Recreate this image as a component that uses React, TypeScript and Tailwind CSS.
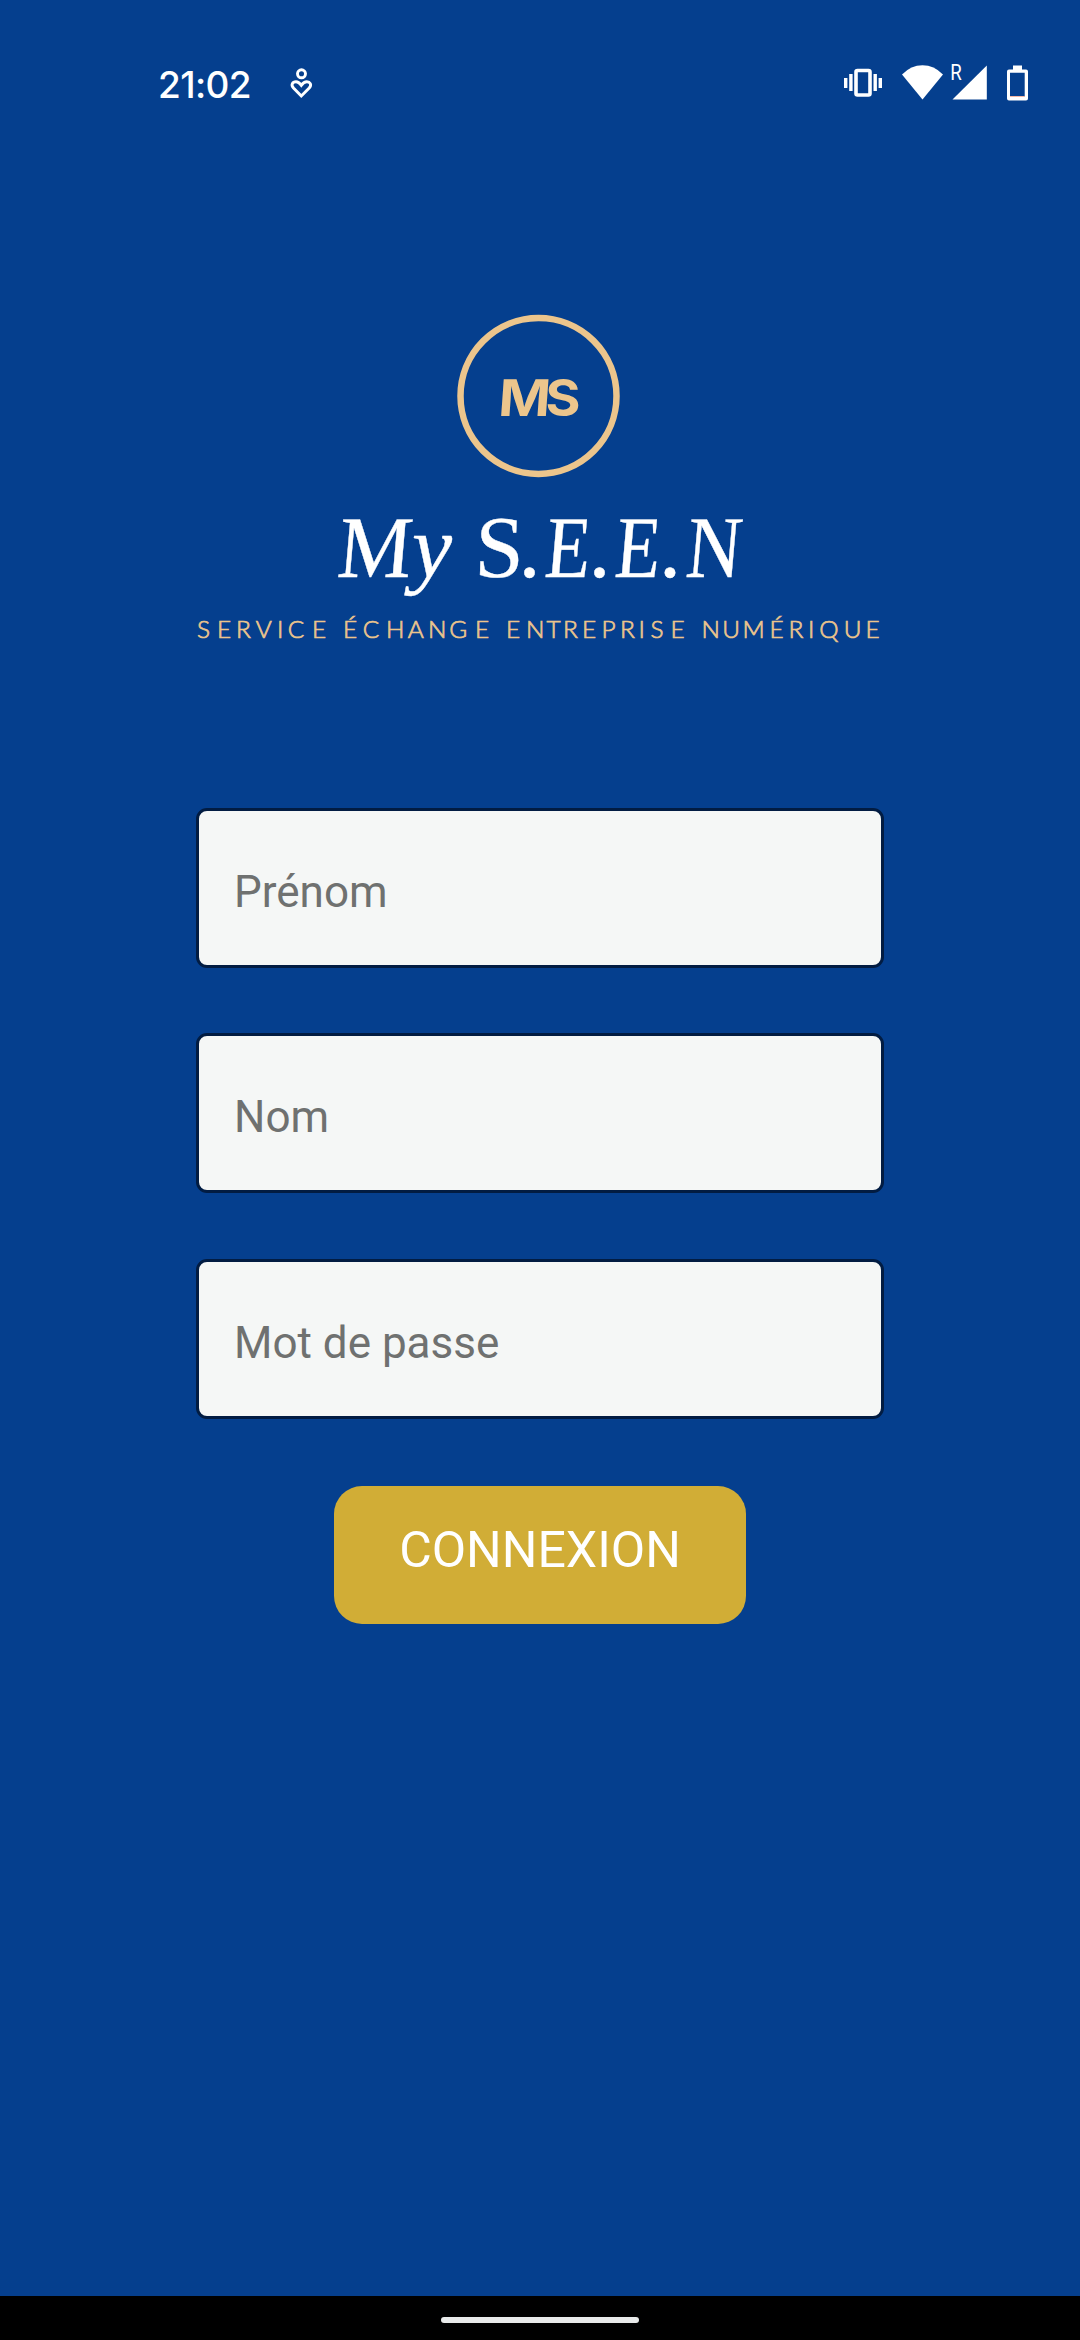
import React from "react";

const GOLD = "#ecc58c";

type Glyph = { ch: string; x: number; w: number; skew?: number; italic?: boolean };

const title: Glyph[] = [
  { ch: "M", x: 336, w: 74, skew: -5 },
  { ch: "y", x: 412, w: 40, italic: true },
  { ch: "S", x: 474, w: 49, skew: -2 },
  { ch: ".", x: 518.5, w: 22 },
  { ch: "E", x: 543.5, w: 45, skew: -5 },
  { ch: ".", x: 588.5, w: 22 },
  { ch: "E", x: 613.5, w: 45, skew: -5 },
  { ch: ".", x: 659, w: 22 },
  { ch: "N", x: 684.5, w: 55, skew: -5 },
];

const tagline = [
  { word: "SERVICE", x: "197 217.1 236.1 255.7 277.1 287.7 312.1" },
  { word: "ÉCHANGE", x: "343.1 362.7 386.1 407.7 428.1 449.2 475.1" },
  { word: "ENTREPRISE", x: "506.1 526.1 546.6 563.1 582.1 601.6 620.1 638.6 650.5 670.6" },
  { word: "NUMÉRIQUE", x: "701.6 722.3 742.6 769.6 788.6 808.1 819.2 843.8 865.6" },
];

function Logo() {
  return (
    <svg className="block h-[350px] w-[720px]" viewBox="180 300 720 350" role="img" aria-label="My S.E.E.N">
      <circle cx="538.5" cy="396" r="78" fill="none" stroke={GOLD} strokeWidth="6.5" />
      <g fill={GOLD} fontFamily="Inter, sans-serif" fontWeight="700" fontSize="50.5">
        <text transform="translate(497.5 416) skewX(-4)" textLength="52" lengthAdjust="spacingAndGlyphs">M</text>
        <text transform="translate(545.5 416)" textLength="35" lengthAdjust="spacingAndGlyphs">S</text>
      </g>
      <g fill="#fff" stroke="#fff" strokeWidth="0.4" fontFamily="'Liberation Serif', serif" fontSize="88">
        {title.map((g, i) => (
          <text
            key={i}
            transform={`translate(${g.x} 577) skewX(${g.skew ?? 0})`}
            fontStyle={g.italic ? "italic" : "normal"}
            textLength={g.w}
            lengthAdjust="spacingAndGlyphs"
          >
            {g.ch}
          </text>
        ))}
      </g>
      <g fill={GOLD} stroke={GOLD} strokeWidth="0.7" fontFamily="Lato, sans-serif" fontWeight="300" fontSize="24.4">
        {tagline.map((t) => (
          <text key={t.word} x={t.x} y="638">
            {t.word}
          </text>
        ))}
      </g>
    </svg>
  );
}

function StatusBar() {
  return (
    <header className="flex h-[166px] items-start pt-[60px]">
      <div className="ml-[158px] h-[50px] w-[100px] font-['Inter'] text-[37px] leading-[50px] font-medium tracking-[-0.6px] text-white">21:02</div>
      <svg className="ml-[30px] h-[50px] w-[30px]" viewBox="288 60 30 50" fill="none" stroke="#fff">
        <circle cx="301.5" cy="73.8" r="4" strokeWidth="2.9" />
        <path d="M301.3 96 L293.5 88 C290.5 84.5 292.6 81.7 296 81.7 C298.8 81.7 300 83.5 301.3 85.3 C302.6 83.5 304 81.7 306.8 81.7 C310 81.7 312.2 84.5 309.2 88 Z" strokeWidth="2.9" />
      </svg>
      <svg className="ml-auto mr-[40px] h-[50px] w-[200px]" viewBox="840 60 200 50" fill="#fff">
        <rect x="856" y="70.5" width="14" height="24.5" rx="1.5" fill="none" stroke="#fff" strokeWidth="3.6" />
        <path d="M844 78h3.4v10H844zM849.2 74h3.4v17h-3.4zM873.5 74h3.4v17h-3.4zM878.6 78h3.4v10h-3.4z" />
        <path d="M922.5 99.5 L902 74.5 Q911 65.3 922.5 65.3 T943 74.5 Z" />
        <path d="M986.8 65.5V99.5H952.5Z" />
        <text x="950.3" y="80" fontFamily="Roboto, sans-serif" fontSize="22" textLength="11.5" lengthAdjust="spacingAndGlyphs">R</text>
        <path fillRule="evenodd" d="M1013 65.5h9v4h4q2 0 2 2v27q0 2-2 2h-17q-2 0-2-2v-27q0-2 2-2h4zM1010 72.7h14.7v23.8H1010z" />
        <rect x="1010" y="96" width="14.7" height="1" fill="#f6b8a4" />
      </svg>
    </header>
  );
}

export default function App() {
  return (
    <div className="flex h-[2340px] w-[1080px] flex-col bg-[#053f8e] font-['Roboto',sans-serif]">
      <StatusBar />
      <main className="flex flex-1 flex-col items-center pt-[134px]">
        <Logo />
        <form className="mt-[158px] flex flex-col items-center gap-[65px]">
          {["Prénom", "Nom", "Mot de passe"].map((label) => (
            <input
              key={label}
              placeholder={label}
              className="h-[160px] w-[688px] rounded-[11px] border-3 border-[#021c42] bg-[#f5f7f6] px-[35px] pt-[8px] text-[44px] placeholder:text-[#6f7170] last-of-type:mt-px"
            />
          ))}
          <button type="button" className="mt-[2px] h-[138px] w-[412px] rounded-[28px] bg-[#d1ad36] pb-[10px] text-[50px] text-white">
            CONNEXION
          </button>
        </form>
      </main>
      <footer className="flex h-[44px] justify-center bg-black pt-[21px]">
        <div className="h-[6px] w-[198px] rounded-full bg-[#e8eaea]" />
      </footer>
    </div>
  );
}
